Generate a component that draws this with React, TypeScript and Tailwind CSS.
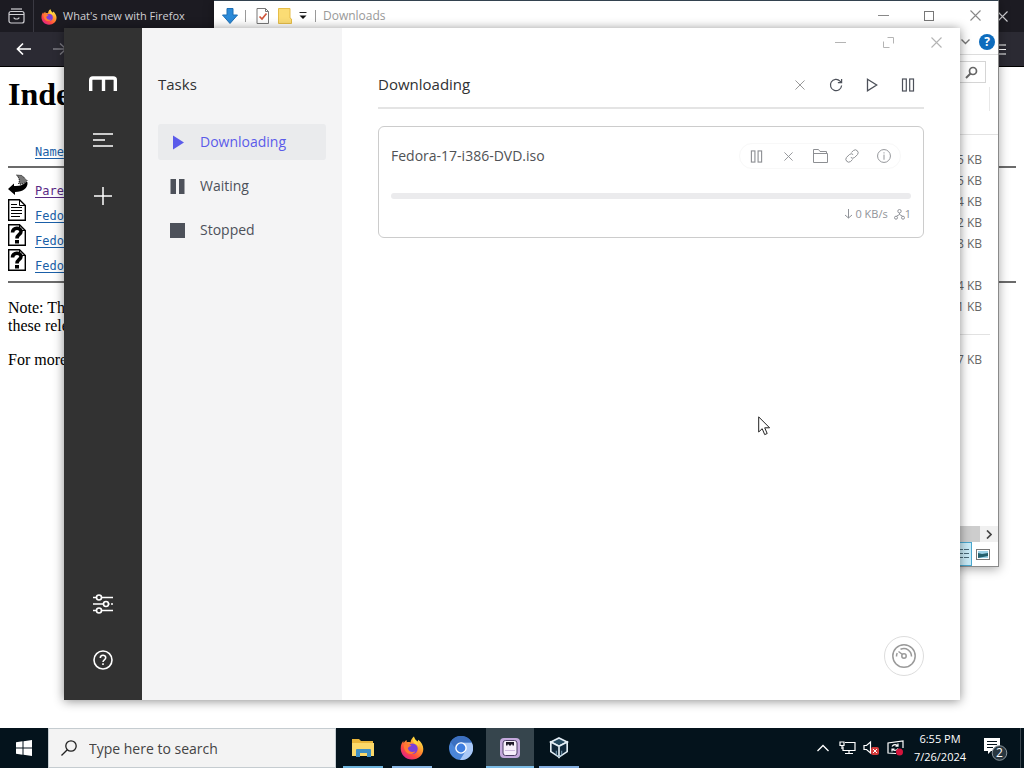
import type { ReactNode } from "react"
import clsx from "clsx"

/* ---------- Logos and icons ---------- */

function FirefoxLogo({ size, id }: { size: number; id: string }) {
  return (
    <svg width={size} height={size} viewBox="0 0 24 24">
      <defs>
        <linearGradient id={`${id}-flame`} x1="0.85" y1="0.1" x2="0.2" y2="0.95">
          <stop offset="0" stopColor="#ffe84a" />
          <stop offset="0.35" stopColor="#ff9a2e" />
          <stop offset="0.7" stopColor="#ff4a3f" />
          <stop offset="1" stopColor="#e0218a" />
        </linearGradient>
      </defs>
      <path
        d="M12 23.5C5.600 23.500 0.700 18.500 0.700 12.400C0.700 9.200 1.900 6.600 3.200 5L3.700 7C4.600 5.500 5.600 4.600 6.500 4L6.800 6.200C8 5.900 9.400 6 10.500 6.500C10.700 4.200 11.900 2 14 0.500C14.100 3 16 4.200 17.700 5.600L18.300 3.700C21.500 6.300 23.300 9.500 23.300 13C23.300 18.900 18.300 23.500 12 23.500Z"
        fill={`url(#${id}-flame)`}
      />
      <circle cx="12.500" cy="12.800" r="5.200" fill="#7a3fd8" />
      <path d="M3.800 8.500C6 7.500 9 8 11.500 9.700C10 10.300 9 10.600 7.800 12C8.500 15.500 12 17 15.500 15.200C13.500 19 7.500 19 5.300 15C4 12.800 3.500 10.500 3.800 8.500Z" fill="#ff7a34" />
      <path d="M14 0.500C14.100 4 18.800 5.500 18.900 11C18 9 16.500 7.700 14.500 7.400C12.500 5.500 12.500 2.500 14 0.500Z" fill="#ffd83c" />
    </svg>
  )
}

function WindowMinimize() {
  return (
    <svg width="11" height="11" viewBox="0 0 11 11" fill="none" stroke="currentColor">
      <path d="M0 5.500H11" />
    </svg>
  )
}

function WindowClose({ size = 11 }: { size?: number }) {
  return (
    <svg width={size} height={size} viewBox="0 0 11 11" fill="none" stroke="currentColor" strokeWidth="1.100">
      <path d="M0.500 0.500L10.500 10.500M10.500 0.500L0.500 10.500" />
    </svg>
  )
}

function PauseOutline({ size = 14 }: { size?: number }) {
  return (
    <svg width={size} height={size} viewBox="0 0 14 14" fill="none" stroke="currentColor" strokeWidth="1.200">
      <rect x="1.500" y="1" width="3.800" height="12" />
      <rect x="8.700" y="1" width="3.800" height="12" />
    </svg>
  )
}

function BackIcon() {
  return (
    <svg width="20" height="22" viewBox="0 0 20 22">
      <path d="M0 15L6 9.500V12C11 12.500 16 11 18.500 7.500L19.500 8.500C20 14 15 18 7 18V21Z" fill="#000" />
      <path d="M8.500 1L14 1.500L19 6.500C17 10 13 11 10.500 9.500C12 7 11.500 4 8.500 1Z" fill="#777" stroke="#000" strokeDasharray="1 1" />
    </svg>
  )
}

function PageIcon({ children }: { children: ReactNode }) {
  return (
    <svg width="20" height="22" viewBox="0 0 20 22">
      <path d="M0.700 0.700H11.500L17.300 6.500V21.300H0.700Z" fill="#fff" stroke="#000" strokeWidth="1.400" />
      <path d="M11.500 0.700V6.500H17.300" fill="none" stroke="#000" />
      {children}
    </svg>
  )
}

function DocIcon() {
  return (
    <PageIcon>
      <path d="M3 5.500H9M3 8.500H14M3 11.500H14M3 14.500H14M3 17.500H12" stroke="#000" />
    </PageIcon>
  )
}

function UnknownIcon() {
  return (
    <PageIcon>
      <path d="M4.500 8.500C4.500 3 13 3 13 7.500C13 10.500 9 10.500 9 14.500" fill="none" stroke="#000" strokeWidth="3.600" />
      <rect x="7" y="16" width="4" height="3.500" fill="#000" />
    </PageIcon>
  )
}

/* ---------- Browser ---------- */

const listing = [
  { name: "Parent", icon: <BackIcon />, visited: true },
  { name: "Fedora", icon: <DocIcon />, visited: false },
  { name: "Fedora", icon: <UnknownIcon />, visited: false },
  { name: "Fedora", icon: <UnknownIcon />, visited: false },
]

function BrowserWindow() {
  return (
    <section className="absolute inset-0 flex flex-col overflow-hidden bg-white">
      <div className="flex h-8 shrink-0 items-center bg-[#1c1b22] text-[#d0d0d4]">
        <button aria-label="Recent browsing" className="flex h-full w-[34px] items-center justify-center border-r border-[#3a3942]">
          <svg width="17" height="16" viewBox="0 0 17 16" fill="none" stroke="currentColor" strokeWidth="1.200">
            <path d="M3 1H14" />
            <rect x="1" y="3.500" width="15" height="11.500" rx="2" />
            <path d="M1 6.500H16M6 9.500C6 11.500 11 11.500 11 9.500" />
          </svg>
        </button>
        <button className="flex items-center gap-1.5 pt-px pl-[7px] text-[11px]">
          <FirefoxLogo size={16} id="tab" />
          What's new with Firefox
        </button>
        <button aria-label="Close browser" className="mr-4 ml-auto">
          <WindowClose />
        </button>
      </div>
      <div className="flex h-[35px] shrink-0 items-center border-b border-black bg-[#2b2a33] px-4 text-white">
        <button aria-label="Back">
          <svg width="16" height="14" viewBox="0 0 16 14" fill="none" stroke="currentColor" strokeWidth="1.700">
            <path d="M15 7H1.500M7 1.500L1.500 7L7 12.500" />
          </svg>
        </button>
        <button aria-label="Forward" className="ml-5 text-[#7d7c84]">
          <svg width="16" height="14" viewBox="0 0 16 14" fill="none" stroke="currentColor" strokeWidth="1.400">
            <path d="M1 7H14M8 1.500L14 7L8 12.500" />
          </svg>
        </button>
        <button aria-label="Open menu" className="ml-auto">
          <svg width="16" height="13" viewBox="0 0 16 13" stroke="currentColor" strokeWidth="1.200">
            <path d="M0 2H14M0 6.500H14M0 11H14" />
          </svg>
        </button>
      </div>
      <div className="flex flex-col px-2 font-['Liberation_Serif',serif] text-base leading-[18px] text-black">
        <h1 className="pt-[9px] text-[32px] leading-9 font-bold">Index</h1>
        <div className="flex flex-col font-['DejaVu_Sans_Mono',monospace] text-xs">
          <div className="mt-8 h-6 border-b-2 border-[#6b6b6b] pl-[27px] leading-4">
            <a href="#name" className="text-[#1a5fa8] underline underline-offset-2">Name</a>
          </div>
          <ul className="flex flex-col border-b-2 border-[#6b6b6b] pt-[3px] pb-[10px]">
            {listing.map((row, index) => (
              <li key={index} className="flex h-[25px] items-end gap-[7px] leading-[10px]">
                {row.icon}
                <a href="#file" className={clsx("underline underline-offset-2", row.visited ? "text-[#5b2a86]" : "text-[#1a5fa8]")}>
                  {row.name}
                </a>
              </li>
            ))}
          </ul>
        </div>
        <p className="mt-4">
          Note: These
          <br />
          these releases
        </p>
        <p className="mt-4">For more</p>
      </div>
    </section>
  )
}

/* ---------- File explorer ---------- */

const sizeGroups = [
  ["5 KB", "5 KB", "4 KB", "2 KB", "8 KB", "", "4 KB", "1 KB"],
  ["7 KB"],
]

function ExplorerWindow() {
  return (
    <section className="absolute top-0 right-[25px] left-[214px] flex h-[567px] flex-col border-t border-r border-b border-t-[#33424f] border-r-[#8a8a8a] border-b-[#8a8a8a] bg-white text-xs text-[#666] shadow-[0_2px_10px_rgba(0,0,0,0.35)]">
      <div className="flex h-[29px] shrink-0 items-center">
        <svg className="ml-2" width="16" height="16" viewBox="0 0 16 16">
          <path d="M5 0.500H11V7H15.500L8 15.500L0.500 7H5Z" fill="#2b8ad8" stroke="#1d6fb5" />
        </svg>
        <span className="ml-[7px] h-3 w-px bg-[#999]" />
        <svg className="ml-[10px]" width="14" height="16" viewBox="0 0 14 16">
          <path d="M1 0.500H9.500L12.500 3.500V15.500H1Z" fill="#fff" stroke="#777" />
          <path d="M9.500 0.500V3.500H12.500" fill="none" stroke="#777" />
          <path d="M3.500 8.500L6 11L10.500 5.500" fill="none" stroke="#d0573c" strokeWidth="1.700" />
        </svg>
        <svg className="ml-2" width="14" height="16" viewBox="0 0 14 16">
          <path d="M0.500 0.500H12V10L13.500 11V15.500H0.500Z" fill="#fbdc74" stroke="#e6bd48" />
        </svg>
        <svg className="ml-[7px]" width="8" height="8" viewBox="0 0 8 8">
          <path d="M0.500 0.500H7.500" stroke="#222" />
          <path d="M0.500 3.500H7.500L4 7Z" fill="#111" />
        </svg>
        <span className="ml-2 h-3 w-px bg-[#999]" />
        <h2 className="ml-[7px] text-[#999]">Downloads</h2>
        <div className="ml-auto flex h-full text-[#888]">
          <button aria-label="Minimize explorer" className="flex w-[46px] items-center justify-center"><WindowMinimize /></button>
          <button aria-label="Maximize explorer" className="flex w-[46px] items-center justify-center">
            <span className="size-2.5 border border-[#777]" />
          </button>
          <button aria-label="Close explorer" className="flex w-[46px] items-center justify-center"><WindowClose /></button>
        </div>
      </div>
      <div className="flex h-[25px] shrink-0 items-center justify-end gap-[9px] border-b border-[#ddd] pr-[3px]">
        <button aria-label="Expand ribbon">
          <svg width="9" height="6" viewBox="0 0 9 6" fill="none" stroke="#777" strokeWidth="1.400">
            <path d="M0.500 0.500L4.500 4.500L8.500 0.500" />
          </svg>
        </button>
        <button aria-label="Explorer help" className="flex size-4 items-center justify-center rounded-full bg-[#0d6cbd] text-xs font-bold text-white">
          ?
        </button>
      </div>
      <div className="flex h-20 shrink-0 flex-col items-end border-b border-[#e2e2e2] pt-1.5 pr-2">
        <button aria-label="Search downloads" className="mr-1 flex h-[22px] w-9 items-center justify-end border border-[#d5d5d5] pr-[7px]">
          <svg width="13" height="13" viewBox="0 0 13 13" fill="none" stroke="#666">
            <circle cx="8" cy="5" r="3.500" strokeWidth="1.700" />
            <path d="M5.500 7.500L1 12" strokeWidth="2" />
          </svg>
        </button>
        <span className="mt-1 h-6 w-px bg-[#e8e8e8]" />
      </div>
      <div className="flex grow flex-col pr-4 text-right">
        {sizeGroups.map((sizes, index) => (
          <ul key={index} className={clsx("-mr-2 pr-2", index === 0 ? "border-b border-[#e2e2e2] pt-[14px] pb-[17px]" : "pt-[14px]")}>
            {sizes.map((size, row) => (
              <li key={row} className="h-[21px] leading-[21px]">{size}</li>
            ))}
          </ul>
        ))}
      </div>
      <div className="flex h-4 shrink-0 justify-end bg-[#f0f0f0]">
        <span className="w-32 bg-[#cdcdcd]" />
        <button aria-label="Scroll right" className="flex w-[18px] items-center justify-center">
          <svg width="6" height="9" viewBox="0 0 6 9" fill="none" stroke="#444" strokeWidth="1.700">
            <path d="M1 0.500L5 4.500L1 8.500" />
          </svg>
        </button>
      </div>
      <div className="flex h-6 shrink-0 justify-end pr-2">
        <button aria-label="Details view" className="flex w-[22px] items-center justify-center border border-[#4aa8cf] bg-[#c9ebf7]">
          <svg width="18" height="12" viewBox="0 0 18 12" stroke="#4a6a78" strokeDasharray="5 1">
            <path d="M0 1.500H18M0 5.500H18M0 9.500H18" />
          </svg>
        </button>
        <button aria-label="Thumbnail view" className="ml-1 flex items-center">
          <svg width="14" height="11" viewBox="0 0 14 11">
            <rect x="0.500" y="0.500" width="13" height="10" fill="#fff" stroke="#777" />
            <rect x="2" y="2" width="10" height="7" fill="#9bd0e6" />
            <path d="M2 4L6 5L12 4V7L2 9Z" fill="#25606d" />
          </svg>
        </button>
      </div>
    </section>
  )
}

/* ---------- Download manager ---------- */

function SideBar() {
  return (
    <nav className="flex w-[78px] shrink-0 flex-col items-center bg-[#323232] pt-12 pb-7 text-white">
      <svg width="28" height="15" viewBox="0 0 28 15" fill="none" stroke="currentColor">
        <path d="M1.700 15V4Q1.700 2 3.700 2H24.300Q26.300 2 26.300 4V15" strokeWidth="3.400" />
        <path d="M14.500 2V15" strokeWidth="3.400" />
      </svg>
      <button aria-label="Task list" className="mt-[37px] flex size-6 items-center justify-center">
        <svg width="20" height="14" viewBox="0 0 20 14" stroke="currentColor" strokeWidth="1.500">
          <path d="M0 1H20M0 7H12M0 13H20" />
        </svg>
      </button>
      <button aria-label="Add task" className="mt-8 flex size-6 items-center justify-center">
        <svg width="18" height="18" viewBox="0 0 18 18" stroke="currentColor" strokeWidth="1.500">
          <path d="M0 9H18M9 0V18" />
        </svg>
      </button>
      <button aria-label="Preferences" className="mt-auto flex size-6 items-center justify-center">
        <svg width="20" height="20" viewBox="0 0 20 20" fill="none" stroke="currentColor" strokeWidth="1.600">
          <path d="M0 3.500H3.500M8.500 3.500H20M0 10H10M15.500 10H16.500M18 10H20M0 16.500H3.500M8.500 16.500H20" />
          <circle cx="6" cy="3.500" r="2.500" />
          <circle cx="13" cy="10" r="2.500" />
          <circle cx="6" cy="16.500" r="2.500" />
        </svg>
      </button>
      <button aria-label="Help" className="mt-8 flex size-6 items-center justify-center">
        <svg width="20" height="20" viewBox="0 0 20 20" fill="none" stroke="currentColor" strokeWidth="1.600">
          <circle cx="10" cy="10" r="9" />
          <path d="M7.300 8C7.300 4.300 12.700 4.300 12.700 7.800C12.700 9.800 10 9.800 10 12M10 13.300V15" />
        </svg>
      </button>
    </nav>
  )
}

const taskFilters = [
  { name: "Downloading", path: "M3 0.500L14 7.500L3 14.500Z", active: true },
  { name: "Waiting", path: "M0.500 0H6V15H0.500ZM9 0H14.500V15H9Z", active: false },
  { name: "Stopped", path: "M0 0H15V15H0Z", active: false },
]

function TaskNav() {
  return (
    <aside className="w-50 shrink-0 bg-[#f4f4f5] px-4 pt-11">
      <h2 className="text-[15px] leading-6 text-[#303133]">Tasks</h2>
      <ul className="mt-7 flex flex-col gap-2">
        {taskFilters.map((filter) => (
          <li key={filter.name}>
            <button
              className={clsx(
                "flex h-9 w-full items-center gap-[15px] rounded-[3px] pl-3 text-sm",
                filter.active ? "bg-[#eaebed] text-[#5b5bea]" : "text-[#4d515a]",
              )}
            >
              <svg width="15" height="15" viewBox="0 0 15 15" fill="currentColor">
                <path d={filter.path} />
              </svg>
              {filter.name}
            </button>
          </li>
        ))}
      </ul>
    </aside>
  )
}

const headerActions = [
  { label: "Delete selected tasks", icon: <WindowClose size={10} />, muted: true },
  {
    label: "Refresh task list",
    icon: (
      <svg width="14" height="14" viewBox="0 0 15 15" fill="none" stroke="currentColor" strokeWidth="1.300">
        <path d="M13.500 8A6 6 0 1 1 11.800 3.300L13.300 4.800M13.500 1V5H9.500" />
      </svg>
    ),
    muted: false,
  },
  {
    label: "Resume all tasks",
    icon: (
      <svg width="14" height="14" viewBox="0 0 14 14" fill="none" stroke="currentColor" strokeWidth="1.300">
        <path d="M2.500 1.200L11.700 7L2.500 12.800Z" />
      </svg>
    ),
    muted: false,
  },
  { label: "Pause all tasks", icon: <PauseOutline />, muted: false },
]

const taskActions = [
  { label: "Pause task", icon: <PauseOutline size={13} /> },
  { label: "Delete task", icon: <WindowClose size={9} /> },
  {
    label: "Show in folder",
    icon: (
      <svg width="15" height="14" viewBox="0 0 15 14" fill="none" stroke="currentColor">
        <path d="M0.500 13.500V0.500H5.500L7 2.500H13.500V4.500M0.500 4.500H14.500V13.500H0.500" />
      </svg>
    ),
  },
  {
    label: "Copy link",
    icon: (
      <svg width="14" height="14" viewBox="0 0 24 24" fill="none" stroke="currentColor" strokeWidth="1.700">
        <path d="M10 14.500A5 5 0 0 0 16.500 14.500L21.500 9.500A5 5 0 0 0 14.500 2.500L11 6" />
        <path d="M14 9.500A5 5 0 0 0 7.500 9.500L2.500 14.500A5 5 0 0 0 9.500 21.500L13 18" />
      </svg>
    ),
  },
  {
    label: "Task details",
    icon: (
      <svg width="14" height="14" viewBox="0 0 15 15" fill="none" stroke="currentColor">
        <circle cx="7.500" cy="7.500" r="6.900" />
        <path d="M7.500 3.500V4.800M7.500 6V11.500" />
      </svg>
    ),
  },
]

function TaskCard() {
  return (
    <article className="mt-[17px] rounded-md border border-[#ccc] px-3 pt-4 pb-[15px]">
      <div className="flex h-[26px] items-center justify-between">
        <h3 className="text-sm text-[#505255]">Fedora-17-i386-DVD.iso</h3>
        <div className="mr-2.5 flex h-full rounded-full border border-[#f8f8f8] text-[#8d8f93]">
          {taskActions.map((action) => (
            <button key={action.label} aria-label={action.label} className="flex w-8 items-center justify-center">
              {action.icon}
            </button>
          ))}
        </div>
      </div>
      <div role="progressbar" aria-label="Download progress" aria-valuenow={0} className="mt-6 h-1.5 rounded-full bg-[#ebebed]" />
      <div className="mt-[7px] flex h-4 items-center justify-end text-[11px] text-[#909399]">
        <svg width="9" height="10" viewBox="0 0 9 10" fill="none" stroke="currentColor">
          <path d="M4.500 0V9M1 6L4.500 9L8 6" />
        </svg>
        <span className="ml-0.5">0 KB/s</span>
        <svg className="ml-1.5" width="11" height="11" viewBox="0 0 11 11" fill="none" stroke="currentColor">
          <circle cx="5.500" cy="2.200" r="1.700" />
          <circle cx="2" cy="8.700" r="1.500" />
          <circle cx="9" cy="8.700" r="1.500" />
          <path d="M5.500 4V5.500L2.500 7.200M5.500 5.500L8.500 7.200" />
        </svg>
        <span>1</span>
      </div>
    </article>
  )
}

function DownloadManager() {
  return (
    <section className="absolute inset-x-16 inset-y-7 flex bg-white shadow-[0_1px_10px_rgba(0,0,0,0.45)]">
      <SideBar />
      <TaskNav />
      <main className="relative flex grow flex-col">
        <div className="flex h-7 justify-end text-[#b4b4b4]">
          <button aria-label="Minimize" className="flex w-12 items-center justify-center"><WindowMinimize /></button>
          <button aria-label="Maximize" className="flex w-12 items-center justify-center">
            <svg width="11" height="11" viewBox="0 0 11 11" fill="none" stroke="currentColor">
              <path d="M4.500 0.500H10.500V6.500M0.500 4.500V10.500H6.500" />
            </svg>
          </button>
          <button aria-label="Close" className="flex w-12 items-center justify-center"><WindowClose /></button>
        </div>
        <div className="px-9">
          <header className="flex h-[53px] items-center justify-between border-b-2 border-[#e4e4e4] pt-1.5">
            <h1 className="text-[15px] text-[#303133]">Downloading</h1>
            <div className="flex gap-1">
              {headerActions.map((action) => (
                <button
                  key={action.label}
                  aria-label={action.label}
                  className={clsx("flex h-8 w-8 items-center justify-center", action.muted ? "text-[#999]" : "text-[#4d515a]")}
                >
                  {action.icon}
                </button>
              ))}
            </div>
          </header>
          <TaskCard />
        </div>
        <button
          aria-label="Speed limit"
          className="absolute right-9 bottom-6 flex size-10 items-center justify-center rounded-full border border-[#ddd] bg-white text-[#9a9a9a]"
        >
          <svg width="24" height="24" viewBox="0 0 24 24" fill="none" stroke="currentColor" strokeWidth="1.500">
            <circle cx="12" cy="12" r="11.200" />
            <circle cx="12" cy="12" r="2.200" />
            <path d="M10.500 10.500L6.500 7.500M4.500 12.500C4.500 11 4.700 10 5.200 9M8.500 5.300C14 3 19.500 6.500 19.500 12.500" />
          </svg>
        </button>
      </main>
    </section>
  )
}

/* ---------- Taskbar ---------- */

const pinnedApps = [
  {
    name: "File Explorer",
    bar: "w-10 bg-[#6db3dc]",
    active: false,
    icon: (
      <svg width="22" height="20" viewBox="0 0 22 20">
        <path d="M0 1H7L9 3H21V18H0Z" fill="#e9b53a" />
        <path d="M0 5H22V18H0Z" fill="#fbd869" />
        <path d="M4 19V12Q4 11 5 11H18Q19 11 19 12V19H15V15H8V19Z" fill="#3f8fc4" />
      </svg>
    ),
  },
  { name: "Firefox", bar: "w-10 bg-[#8ab8e6]", active: false, icon: <FirefoxLogo size={24} id="pin" /> },
  {
    name: "Chromium",
    bar: "",
    active: false,
    icon: (
      <svg width="24" height="24" viewBox="0 0 24 24">
        <circle cx="12" cy="12" r="12" fill="#4a85d8" />
        <path d="M12 6.500H22.700A12 12 0 0 1 11 24L17 14.500Z" fill="#a9c8f7" />
        <path d="M1.600 6A12 12 0 0 1 22.700 6.500H12L7 13Z" fill="#3c70c0" />
        <circle cx="12" cy="12" r="5.800" fill="#fff" />
        <circle cx="12" cy="12" r="4.400" fill="#3f7ee0" />
      </svg>
    ),
  },
  {
    name: "Motrix",
    bar: "w-full bg-[#7cbce6]",
    active: true,
    icon: (
      <svg width="20" height="20" viewBox="0 0 20 20">
        <rect width="20" height="20" rx="4" fill="#c4a9dd" />
        <rect x="3" y="2.500" width="14" height="15" rx="2.500" fill="#f6eefb" stroke="#4c3c66" />
        <path d="M6 4H14V7.500H12.500V6.500H11V7.500H9V6.500H7.500V7.500H6Z" fill="#1d1828" />
        <path d="M5 12.500H15" stroke="#cdb9dd" />
      </svg>
    ),
  },
  {
    name: "VirtualBox",
    bar: "w-10 bg-[#84aee0]",
    active: false,
    icon: (
      <svg width="20" height="22" viewBox="0 0 22 24" fill="none" stroke="#e4eef5" strokeWidth="1.800">
        <path d="M11 1L20 5.500L11 10L2 5.500Z" fill="#24495f" />
        <path d="M2 5.500V16L11 22V10ZM20 5.500V16L11 22V10Z" fill="#10283a" />
        <path d="M8 15V19.500L11 21.500L14 19.500V15" stroke="#8cb2c6" strokeWidth="1" />
      </svg>
    ),
  },
]

function Taskbar() {
  return (
    <footer className="flex h-10 shrink-0 bg-[#04131c] text-white">
      <button aria-label="Start" className="flex w-12 items-center justify-center">
        <svg width="16" height="16" viewBox="0 0 16 16" fill="currentColor">
          <path d="M0 2.200L6.500 1.300V7.500H0ZM7.500 1.200L16 0V7.500H7.500ZM0 8.500H6.500V14.700L0 13.800ZM7.500 8.500H16V16L7.500 14.800Z" />
        </svg>
      </button>
      <label className="flex w-72 items-center gap-3 border border-[#c5ccd0] bg-[#f3f3f3] pl-3">
        <svg className="shrink-0" width="16" height="16" viewBox="0 0 16 16" fill="none" stroke="#222" strokeWidth="1.300">
          <circle cx="10" cy="6" r="5.200" />
          <path d="M6.300 9.700L0.500 15.500" />
        </svg>
        <input
          type="text"
          aria-label="Search"
          placeholder="Type here to search"
          className="w-full bg-transparent pt-0.5 text-sm text-[#444] outline-none placeholder:text-[#444]"
        />
      </label>
      <div className="ml-[3px] flex gap-px">
        {pinnedApps.map((app) => (
          <button
            key={app.name}
            aria-label={app.name}
            className={clsx("flex w-12 flex-col items-center", app.active && "bg-[#36454d]")}
          >
            <span className="flex grow items-center pt-0.5">{app.icon}</span>
            <span className={clsx("h-0.5", app.bar)} />
          </button>
        ))}
      </div>
      <div className="ml-auto flex items-center">
        <button aria-label="Show hidden icons">
          <svg width="12" height="8" viewBox="0 0 12 8" fill="none" stroke="currentColor" strokeWidth="1.300">
            <path d="M0.500 7L6 1.500L11.500 7" />
          </svg>
        </button>
        <button aria-label="Network" className="ml-2.5">
          <svg width="17" height="16" viewBox="0 0 17 16" fill="none" stroke="currentColor" strokeWidth="1.200">
            <path d="M6 2.500H16V10.500H4V6.500M10 10.500V13.500M6 13.500H14" />
            <path d="M1 2H5V5.500H1ZM3 5.500V9" />
          </svg>
        </button>
        <button aria-label="Volume muted" className="ml-[7px]">
          <svg width="17" height="16" viewBox="0 0 17 16" fill="none" stroke="currentColor">
            <path d="M1 5.500H3.500L7.500 2V13L3.500 9.500H1Z" strokeWidth="1.200" />
            <rect x="8" y="7" width="8" height="8" rx="2" fill="#d43a3a" stroke="none" />
            <path d="M10 9L14 13M14 9L10 13" />
          </svg>
        </button>
        <button aria-label="Updates" className="ml-[7px]">
          <svg width="17" height="16" viewBox="0 0 17 16" fill="none" stroke="currentColor" strokeWidth="1.200">
            <path d="M9 13.500L1 13V3L16 1V8" />
            <path d="M5 6.500C6.500 4 9.500 4 11 6M11 3.500V6.200H8.500M11 8.500C9.500 11 6.500 11 5.300 9M5 11.500V9H7.500" />
            <circle cx="12.500" cy="12" r="3.500" fill="#d4143c" stroke="none" />
          </svg>
        </button>
        <button className="ml-2 flex w-14 flex-col items-center text-[11px] leading-[18px] whitespace-nowrap">
          <span>6:55 PM</span>
          <span>7/26/2024</span>
        </button>
        <button aria-label="Notifications" className="ml-3.5 pr-3">
          <svg width="26" height="26" viewBox="0 0 26 26">
            <path d="M2 3H18V16H9L6 19V16H2Z" fill="#fff" />
            <path d="M5 6.500H15M5 9.500H15M5 12.500H11" stroke="#04131c" />
            <circle cx="17.500" cy="18" r="7.300" fill="#293740" stroke="#8b969c" />
            <text x="17.500" y="22" textAnchor="middle" fontSize="12" fill="#fff">2</text>
          </svg>
        </button>
        <span className="mr-[3px] h-10 w-px bg-[#3a464e]" />
      </div>
    </footer>
  )
}

function MousePointer() {
  return (
    <svg className="absolute top-[416px] left-[758px]" width="13" height="20" viewBox="0 0 13 20">
      <path d="M0.700 0.900V16L4.200 12.700L6.700 18.600L9.200 17.500L6.700 11.800H11.600Z" fill="#fff" stroke="#222" />
    </svg>
  )
}

export default function App() {
  return (
    <div className="flex h-screen flex-col overflow-hidden font-['Open_Sans',sans-serif]">
      <div className="relative grow">
        <BrowserWindow />
        <ExplorerWindow />
        <DownloadManager />
        <MousePointer />
      </div>
      <Taskbar />
    </div>
  )
}
